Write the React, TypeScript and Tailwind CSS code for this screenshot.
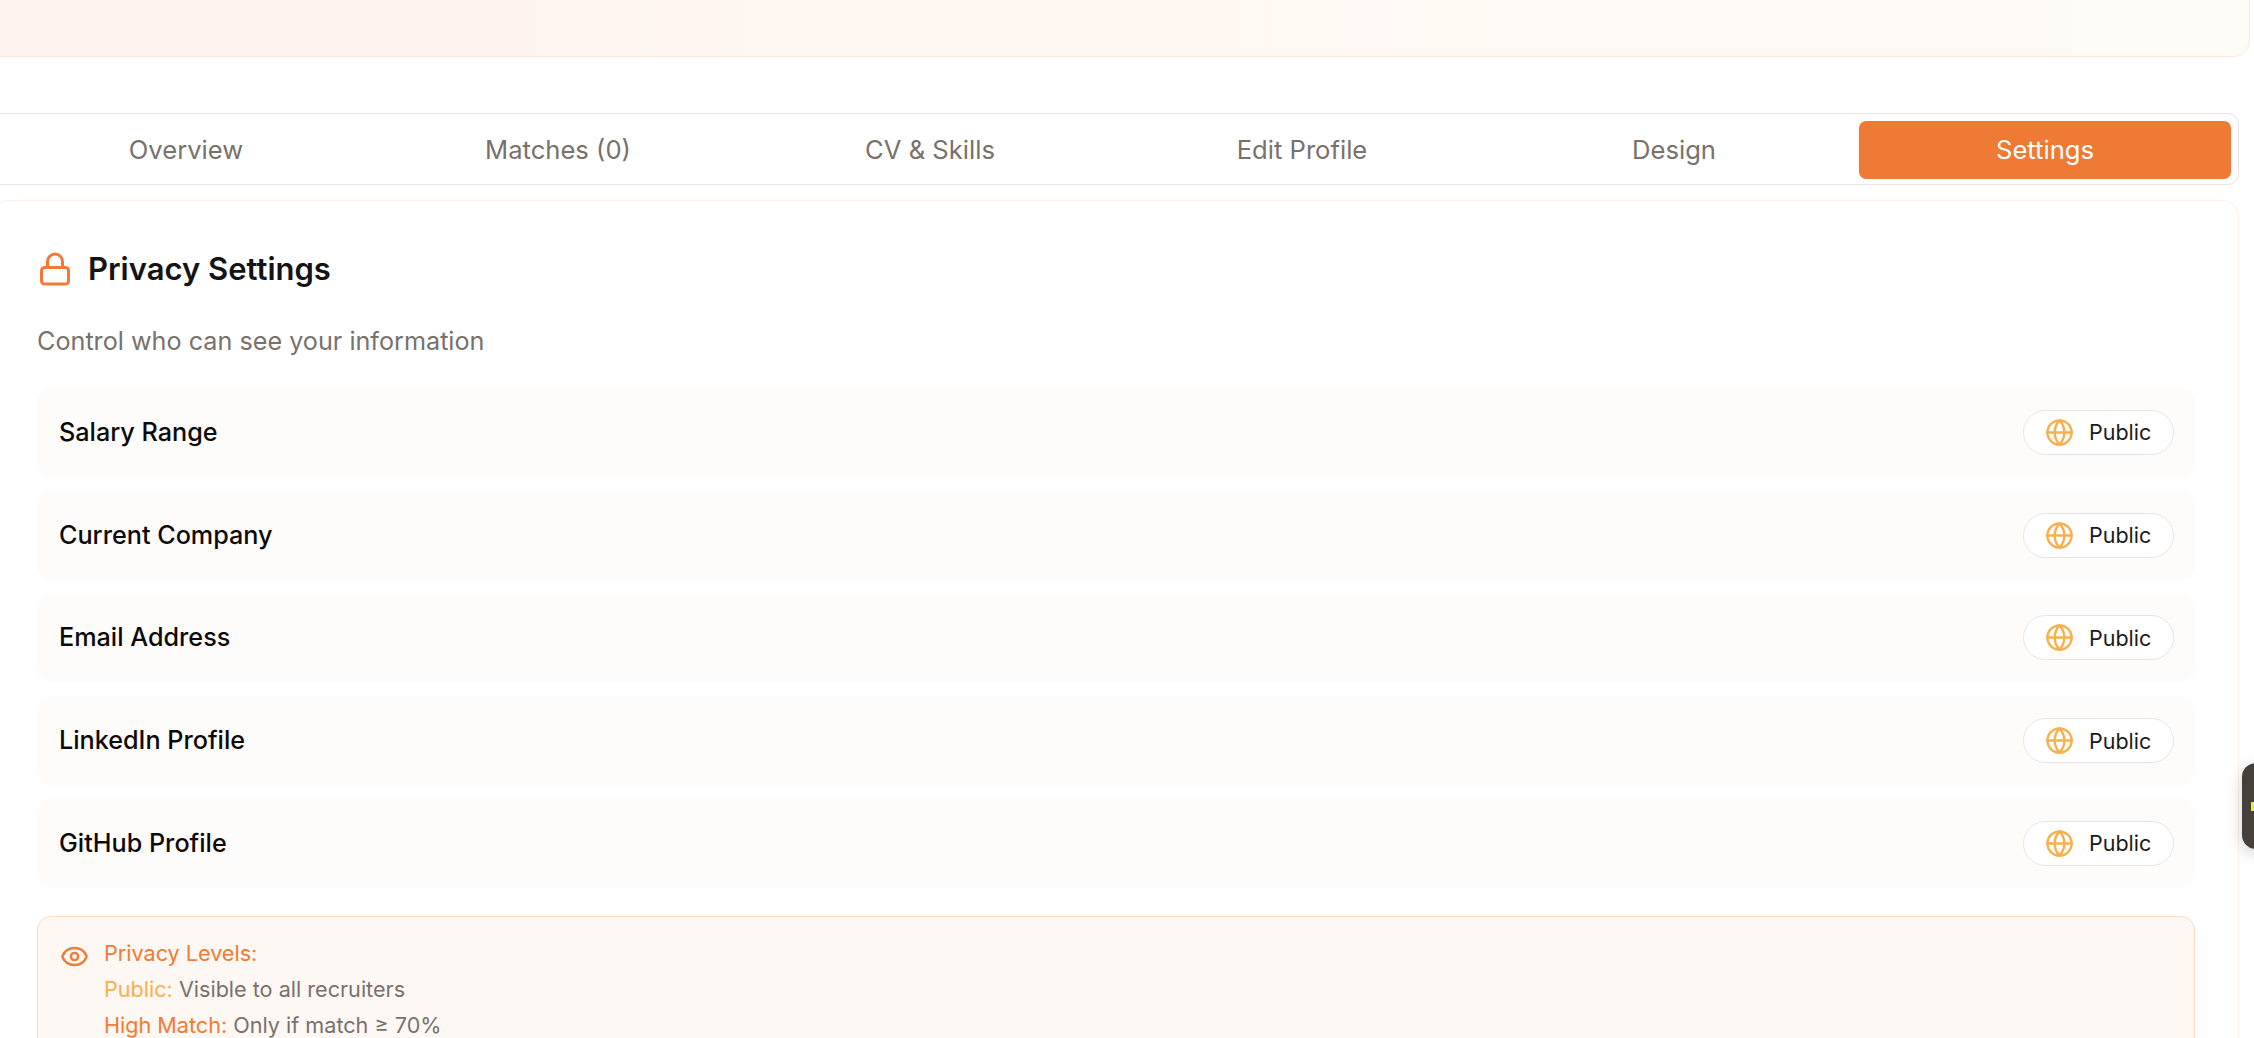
import React from "react";
import { Eye, Globe, Lock } from "lucide-react";

const TABS = ["Overview", "Matches (0)", "CV & Skills", "Edit Profile", "Design", "Settings"];
const FIELDS = ["Salary Range", "Current Company", "Email Address", "LinkedIn Profile", "GitHub Profile"];

export default function App() {
  return (
    <div className="relative h-[1038px] w-[2254px] overflow-hidden bg-white font-['Inter',sans-serif]">
      {/* Banner, mostly scrolled out of view */}
      <div className="-ml-[20px] h-[57px] w-[2270px] rounded-b-[17px] border border-t-0 border-[#fde8db] bg-gradient-to-r from-[#fef4ef] to-[#fffbf7]" />

      <div className="-ml-[9px] mt-[56px] w-[2248px]">
        {/* Tabs */}
        <div className="grid h-[72px] grid-cols-6 rounded-[11px] border border-[#e7e5e4] bg-white pb-[5px] pl-[7px] pr-[7px] pt-[7px]">
          {TABS.map((tab) => (
            <div
              key={tab}
              className={
                tab === "Settings"
                  ? "flex items-center justify-center rounded-[7px] bg-[#ef7a35] pt-[1px] text-[25.6px] font-normal text-white"
                  : "flex items-center justify-center pl-[2px] pt-[1px] text-[25.6px] font-normal text-[#78716c]"
              }
            >
              {tab}
            </div>
          ))}
        </div>

        {/* Privacy card */}
        <div className="mt-[15px] h-[900px] rounded-[17px] border border-[#fdf0e3] bg-white pl-[45px] pr-[43px] pt-[44px]">
          <div className="flex items-center gap-[15px]">
            <Lock size={36} strokeWidth={2} className="text-[#f37a35]" />
            <h2 className="pt-[1px] text-[31px] font-semibold leading-[46px] text-[#141414]">Privacy Settings</h2>
          </div>
          <p className="mt-[32px] text-[25.2px] leading-[34px] text-[#78716c]">Control who can see your information</p>

          <div className="mt-[30px] flex flex-col gap-[14px]">
            {FIELDS.map((field) => (
              <div key={field} className="flex h-[88.75px] items-center justify-between rounded-[14px] bg-[#fdfcfa] pl-[22px] pr-[21px]">
                <span className="pt-[1px] text-[25.2px] font-medium text-[#0c0a09]">{field}</span>
                <div className="flex h-[45px] w-[151px] items-center gap-[15px] rounded-full border border-[#e7e5e4] bg-white pl-[21px]">
                  <Globe size={29} strokeWidth={2} className="text-[#f8b04f]" />
                  <span className="text-[21.5px] font-normal text-[#1c1917]">Public</span>
                </div>
              </div>
            ))}
          </div>

          {/* Legend */}
          <div className="mt-[28px] flex h-[300px] gap-[15px] rounded-[14px] border border-[#fcdcc4] bg-[#fdf8f4] pl-[22px] pt-[18px]">
            <Eye size={29} strokeWidth={2} className="mt-[7px] text-[#f37a35]" />
            <div className="text-[21.6px] leading-[36px] text-[#78716c]">
              <p className="font-normal text-[#f37a35]">Privacy Levels:</p>
              <p>
                <span className="font-normal text-[#f8b04f]">Public:</span> Visible to all recruiters
              </p>
              <p>
                <span className="font-normal text-[#f37a35]">High Match:</span> Only if match ≥ 70%
              </p>
            </div>
          </div>
        </div>
      </div>

      {/* Floating widget at the edge of the window */}
      <div className="absolute left-[2242px] top-[763px] flex h-[86px] w-[40px] items-center rounded-[14px] bg-[#45413a] pl-[9px] shadow-[0_4px_16px_rgba(0,0,0,0.18)]">
        <div className="h-[9px] w-[6px] bg-[#e6ec3a]" />
      </div>
    </div>
  );
}
